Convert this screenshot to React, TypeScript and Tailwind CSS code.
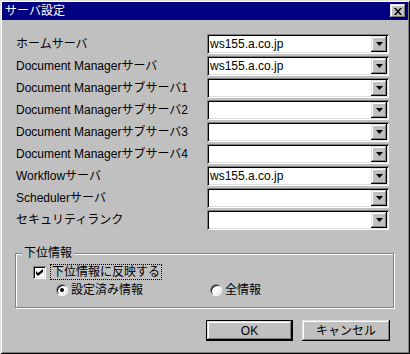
import React from 'react';

const FONT = { fontFamily: '"Liberation Sans", "Noto Sans CJK JP", sans-serif' };

const rows: { label: string; value: string }[] = [
  { label: 'ホームサーバ', value: 'ws155.a.co.jp' },
  { label: 'Document Managerサーバ', value: 'ws155.a.co.jp' },
  { label: 'Document Managerサブサーバ1', value: '' },
  { label: 'Document Managerサブサーバ2', value: '' },
  { label: 'Document Managerサブサーバ3', value: '' },
  { label: 'Document Managerサブサーバ4', value: '' },
  { label: 'Workflowサーバ', value: 'ws155.a.co.jp' },
  { label: 'Schedulerサーバ', value: '' },
  { label: 'セキュリティランク', value: '' },
];

const raised =
  'shadow-[inset_-1px_-1px_#000,inset_1px_1px_#dfdfdf,inset_-2px_-2px_#808080,inset_2px_2px_#fff]';

function Combo({ value }: { value: string }) {
  return (
    <div className="relative w-[182px] h-[20px] bg-white shadow-[inset_1px_1px_#808080,inset_-1px_-1px_#fff,inset_2px_2px_#000,inset_-2px_-2px_#dfdfdf]">
      <div className="absolute left-[3px] top-[2px] text-[12px] leading-[16px] text-black">{value}</div>
      <div className={`absolute right-[2px] top-[2px] w-[16px] h-[16px] bg-[#c0c0c0] flex items-center justify-center ${raised}`}>
        <svg width="7" height="4" viewBox="0 0 7 4">
          <path d="M0 0h7L3.5 4z" fill="#000" />
        </svg>
      </div>
    </div>
  );
}

function Radio({ checked, label }: { checked: boolean; label: string }) {
  return (
    <div className="flex items-center gap-[3px]">
      <div className="w-[12px] h-[12px] rounded-full bg-white flex items-center justify-center border border-t-[#808080] border-l-[#808080] border-b-[#fff] border-r-[#fff] shadow-[inset_1px_1px_#000,inset_-1px_-1px_#dfdfdf]">
        {checked && <div className="w-[4px] h-[4px] rounded-full bg-black" />}
      </div>
      <span className="text-[12px] leading-[14px]">{label}</span>
    </div>
  );
}

export default function App() {
  return (
    <div
      style={FONT}
      className="w-[410px] h-[354px] bg-[#c0c0c0] p-[2px] flex flex-col text-black shadow-[inset_1px_1px_#dfdfdf,inset_-1px_-1px_#000,inset_2px_2px_#fff,inset_-2px_-2px_#808080]"
    >
      {/* Title bar */}
      <div className="h-[18px] bg-[#000080] flex items-center justify-between pl-[3px] pr-[2px]">
        <span className="text-white text-[12px] leading-[14px]">サーバ設定</span>
        <div className={`w-[16px] h-[14px] bg-[#c0c0c0] flex items-center justify-center ${raised}`}>
          <svg width="8" height="7" viewBox="0 0 8 7">
            <path d="M0 0h2l2 2.5L6 0h2L5 3.5 8 7H6L4 4.5 2 7H0l3-3.5z" fill="#000" />
          </svg>
        </div>
      </div>

      {/* Server rows */}
      <div className="pt-[13px] pl-[14px] flex flex-col">
        {rows.map((r, i) => (
          <div key={i} className="flex items-center h-[22px]">
            <span className="w-[191px] text-[12px] leading-[14px]">{r.label}</span>
            <Combo value={r.value} />
          </div>
        ))}
      </div>

      {/* Group */}
      <div className="relative mt-[22px] ml-[13px] w-[379px] h-[55px] border border-[#808080] shadow-[inset_1px_1px_#fff,1px_1px_#fff]">
        <span className="absolute -top-[8px] left-[6px] px-[2px] bg-[#c0c0c0] text-[12px] leading-[14px]">下位情報</span>
        <div className="pt-[10px] pl-[17px] flex flex-col">
          <div className="flex items-center h-[16px] gap-[4px]">
            <div className="w-[13px] h-[13px] bg-white flex items-center justify-center shadow-[inset_1px_1px_#808080,inset_-1px_-1px_#fff,inset_2px_2px_#000,inset_-2px_-2px_#dfdfdf]">
              <svg width="7" height="7" viewBox="0 0 7 7">
                <path d="M0 2l2 2 5-4v3L2 7 0 5z" fill="#000" />
              </svg>
            </div>
            <span className="border border-dotted border-black px-[1px] text-[12px] leading-[14px]">下位情報に反映する</span>
          </div>
          <div className="flex items-center h-[14px] mt-[3px] pl-[23px]">
            <div className="w-[154px]">
              <Radio checked label="設定済み情報" />
            </div>
            <Radio checked={false} label="全情報" />
          </div>
        </div>
      </div>

      {/* Buttons */}
      <div className="mt-[12px] pl-[204px] flex gap-[9px]">
        <div className="w-[87px] h-[21px] border border-black">
          <div className={`w-full h-full bg-[#c0c0c0] flex items-center justify-center text-[12px] ${raised}`}>OK</div>
        </div>
        <div className={`w-[88px] h-[21px] bg-[#c0c0c0] flex items-center justify-center text-[12px] ${raised}`}>キャンセル</div>
      </div>
    </div>
  );
}
